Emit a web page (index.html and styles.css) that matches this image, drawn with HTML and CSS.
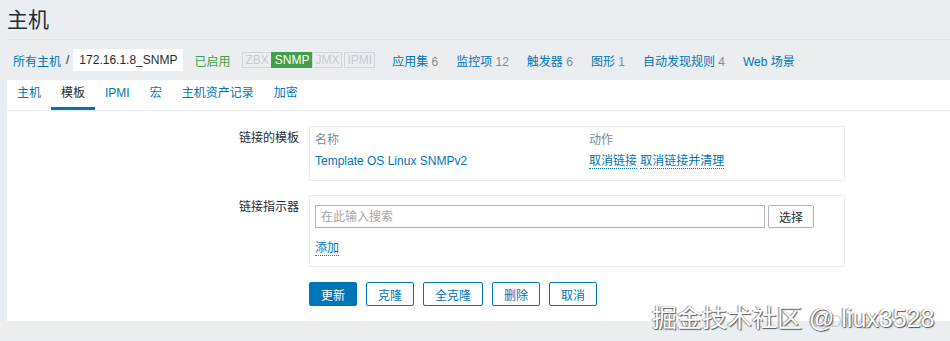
FILE: index.html
```html
<!DOCTYPE html>
<html lang="zh-CN">
<head>
    <meta charset="UTF-8">
    <title>主机</title>
    <link rel="stylesheet" href="styles.css">
</head>
<body>
    <div class="page">
        <header class="header">
            <h1>主机</h1>
        </header>

        <!-- 面包屑与主机导航 -->
        <nav class="breadcrumbs">
            <a class="link crumb-first">所有主机</a>
            <span class="sep">/</span>
            <span class="current">172.16.1.8_SNMP</span>
            <span class="status-on">已启用</span>
            <span class="avail">
                <span class="av">ZBX</span><span class="av av-ok">SNMP</span><span class="av">JMX</span><span class="av">IPMI</span>
            </span>
            <a class="link nav-item">应用集 <span class="count">6</span></a>
            <a class="link nav-item">监控项 <span class="count">12</span></a>
            <a class="link nav-item">触发器 <span class="count">6</span></a>
            <a class="link nav-item">图形 <span class="count">1</span></a>
            <a class="link nav-item">自动发现规则 <span class="count">4</span></a>
            <a class="link nav-item">Web 场景</a>
        </nav>

        <div class="panel">
            <ul class="tabs">
                <li class="tab">主机</li>
                <li class="tab active">模板</li>
                <li class="tab">IPMI</li>
                <li class="tab">宏</li>
                <li class="tab">主机资产记录</li>
                <li class="tab">加密</li>
            </ul>

            <form class="form">
                <div class="row">
                    <label class="label">链接的模板</label>
                    <div class="field box">
                        <table class="linked">
                            <tr class="thead">
                                <td class="col-name">名称</td>
                                <td>动作</td>
                            </tr>
                            <tr>
                                <td class="col-name"><a class="link">Template OS Linux SNMPv2</a></td>
                                <td><a class="link action">取消链接</a> <a class="link action">取消链接并清理</a></td>
                            </tr>
                        </table>
                    </div>
                </div>

                <div class="row">
                    <label class="label">链接指示器</label>
                    <div class="field box box-link">
                        <div class="search">
                            <input type="text" class="search-input" placeholder="在此输入搜索">
                            <button type="button" class="btn-grey">选择</button>
                        </div>
                        <a class="link action add">添加</a>
                    </div>
                </div>

                <div class="row">
                    <span class="label"></span>
                    <div class="buttons">
                        <button type="button" class="btn btn-main">更新</button>
                        <button type="button" class="btn">克隆</button>
                        <button type="button" class="btn">全克隆</button>
                        <button type="button" class="btn">删除</button>
                        <button type="button" class="btn">取消</button>
                    </div>
                </div>
            </form>
        </div>
    </div>

    <!-- 水印 -->
    <div class="wm-back">CSDN @liux3528</div>
    <div class="wm">掘金技术社区 @ liux3528</div>
</body>
</html>
```

FILE: styles.css
```css
body {
    margin: 0;
    background-color: #ebeef0;
    font-family: "Liberation Sans", "Noto Sans CJK SC", sans-serif;
    font-size: 12px;
    color: #1f2c33;
    height: 341px;
    overflow: hidden;
    position: relative;
}

.page {
    padding-left: 7px;
}

.header {
    height: 39px;
    border-bottom: 1px solid #dde2e5;
}

h1 {
    margin: 0;
    font-size: 21px;
    font-weight: normal;
    line-height: 39px;
    color: #1f2c33;
}

.link {
    color: #0275b8;
    text-decoration: none;
    cursor: pointer;
}

/* 面包屑 */
.breadcrumbs {
    height: 40px;
    display: flex;
    align-items: center;
    white-space: nowrap;
}

.crumb-first {
    margin-left: 6px;
}

.sep {
    margin: 0 4px 0 5px;
    color: #1f2c33;
}

.current {
    background-color: #ffffff;
    padding: 0 6px;
    line-height: 22px;
    color: #1f2c33;
}

.status-on {
    color: #429e47;
    margin-left: 11px;
}

.avail {
    display: flex;
    margin-left: 12px;
    margin-right: 18px;
}

.av {
    border: 1px solid #cfd4d7;
    color: #c6cbce;
    line-height: 14px;
    padding: 0 2px;
    margin-right: -1px;
}

.av-ok {
    background-color: #429e47;
    border-color: #429e47;
    color: #ffffff;
    padding: 0 3px;
}

.av:last-child {
    margin-left: 3px;
}

.nav-item {
    margin-right: 18px;
}

.count {
    color: #768d99;
}

/* 面板 */
.panel {
    background-color: #ffffff;
    padding-bottom: 15px;
}

.tabs {
    list-style: none;
    margin: 0;
    padding: 0;
    display: flex;
    border-bottom: 1px solid #ebeef0;
}

.tab {
    padding: 0 10px;
    line-height: 27px;
    border-bottom: 3px solid transparent;
    color: #0275b8;
}

.tab.active {
    color: #1f2c33;
    border-bottom-color: #0275b8;
}

.form {
    padding-top: 15px;
}

.row {
    display: flex;
    margin-bottom: 14px;
}

.row:last-child {
    margin-bottom: 0;
}

.label {
    width: 302px;
    flex-shrink: 0;
    text-align: right;
    padding-right: 10px;
    box-sizing: border-box;
    line-height: 24px;
}

.box {
    border: 1px solid #ebeef0;
    width: 536px;
    box-sizing: border-box;
    padding: 3px 5px 8px 5px;
}

.linked {
    border-collapse: collapse;
    width: 100%;
}

.linked td {
    padding: 0;
    line-height: 21px;
}

.thead td {
    color: #768d99;
}

.col-name {
    width: 274px;
}

.action {
    border-bottom: 1px dotted #0275b8;
}

.box-link {
    padding: 9px 5px 10px 5px;
}

.search {
    display: flex;
    gap: 3px;
}

.search-input {
    width: 450px;
    height: 23px;
    box-sizing: border-box;
    border: 1px solid #acb6bb;
    padding: 0 5px;
    font-family: inherit;
    font-size: 12px;
    margin: 0;
}

.search-input::placeholder {
    color: #a6a6a6;
}

.btn-grey {
    height: 23px;
    width: 46px;
    border: 1px solid #acb6bb;
    border-radius: 2px;
    background-color: #ffffff;
    font-family: inherit;
    font-size: 12px;
    color: #1f2c33;
    padding: 0;
}

.add {
    display: inline-block;
    margin-top: 13px;
    line-height: 14px;
}

.buttons {
    display: flex;
    gap: 9px;
    padding-top: 1px;
}

.btn {
    height: 24px;
    padding: 0 11px;
    border: 1px solid #0275b8;
    border-radius: 2px;
    background-color: #ffffff;
    color: #0275b8;
    font-family: inherit;
    font-size: 12px;
}

.btn-main {
    background-color: #0275b8;
    color: #ffffff;
}

/* 水印 */
.wm {
    position: absolute;
    left: 652px;
    top: 298px;
    font-size: 25px;
    color: #ffffff;
    white-space: nowrap;
    text-shadow: 1px 1px 1px #555555, -1px 0 1px #888888;
}

.wm-back {
    position: absolute;
    left: 808px;
    top: 313px;
    font-size: 16px;
    color: rgba(160, 170, 176, 0.45);
    white-space: nowrap;
}
```
